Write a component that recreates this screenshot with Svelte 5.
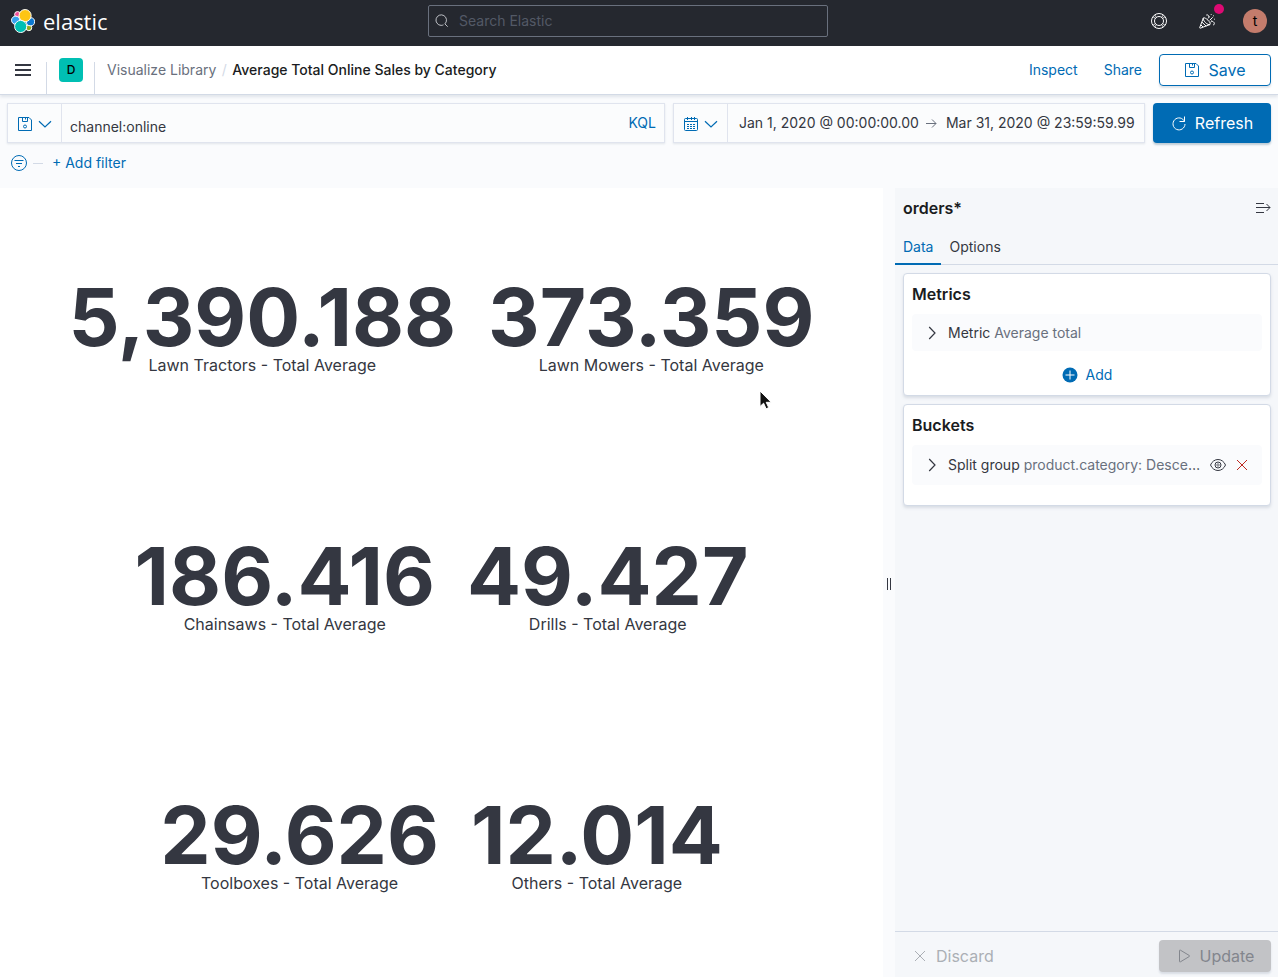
<script>
  const metrics = [
    { value: '5,390.188', label: 'Lawn Tractors - Total Average' },
    { value: '373.359', label: 'Lawn Mowers - Total Average' },
    { value: '186.416', label: 'Chainsaws - Total Average' },
    { value: '49.427', label: 'Drills - Total Average' },
    { value: '29.626', label: 'Toolboxes - Total Average' },
    { value: '12.014', label: 'Others - Total Average' }
  ];
  const tabs = ['Data', 'Options'];
  let activeTab = $state('Data');
  let query = $state('channel:online');
  let search = $state('');
</script>

{#snippet saveIcon()}
  <svg class="icon" viewBox="0 0 16 16" aria-hidden="true">
    <path d="M1.500 1.500h10.500l2.500 2.500v10.500h-13z" />
    <path d="M5.500 1.500v4h5v-4M8.500 1.500v2" />
    <circle cx="8" cy="10.500" r="1.500" />
  </svg>
{/snippet}

{#snippet chevronDown()}
  <svg class="icon" viewBox="0 0 16 16" aria-hidden="true"><path stroke-width="1.200" d="M2 5.200 8 11l6-5.800" /></svg>
{/snippet}

{#snippet chevronRight()}
  <svg class="icon" viewBox="0 0 16 16" aria-hidden="true"><path stroke-width="1.200" d="M5.200 2 11 8l-5.800 6" /></svg>
{/snippet}

{#snippet cross()}
  <svg class="icon" viewBox="0 0 16 16" aria-hidden="true"><path d="m3 3 10 10M13 3 3 13" /></svg>
{/snippet}

<div class="app">
  <header class="top">
    <a class="brand" href="#home" aria-label="Elastic home">
      <svg class="logo" viewBox="0 0 32 32" aria-hidden="true">
        <g stroke="#fff" stroke-width="1.300">
          <circle cx="8.700" cy="7.300" r="3.900" fill="#f04e98" />
          <circle cx="23.800" cy="25" r="3.900" fill="#93a81e" />
          <circle cx="6.200" cy="15" r="5.500" fill="#36a2ef" />
          <circle cx="26" cy="17" r="5.400" fill="#0b78d0" />
          <circle cx="18.800" cy="8.800" r="8.100" fill="#fec514" />
          <circle cx="12.900" cy="23.300" r="8.100" fill="#00bfb3" />
        </g>
      </svg>
      <span>elastic</span>
    </a>
    <label class="search">
      <svg class="icon" viewBox="0 0 16 16" aria-hidden="true">
        <path d="M11.300 11.300A6 6 0 1 0 7 13c1 0 1.900-.2 2.700-.6M11.300 11.300l3.200 3.200" />
      </svg>
      <input type="search" placeholder="Search Elastic" aria-label="Search Elastic" bind:value={search} />
    </label>
    <div class="tools">
      <button aria-label="Help">
        <svg class="icon" viewBox="0 0 16 16" aria-hidden="true">
          <circle cx="8" cy="8" r="7.500" /><circle cx="8" cy="8" r="4.500" />
          <path stroke-width=".8" d="M5.300 4.400 3.800 2M4.400 5.300 2 3.800M10.700 4.400 12.200 2M11.600 5.300 14 3.800M5.300 11.600 3.800 14M4.400 10.700 2 12.200M10.700 11.600l1.500 2.400M11.600 10.700l2.400 1.500" />
        </svg>
      </button>
      <button class="news" aria-label="News feed">
        <svg class="icon" viewBox="0 0 16 16" aria-hidden="true">
          <path d="M4.400 4.900.7 14.600c-.1.400.2.700.6.600L11 11.500M4.400 4.900c.7-.6 2.900.6 4.600 2.300s2.700 3.600 2 4.300c-.8.700-2.900-.3-4.600-2S3.700 5.700 4.400 4.900zM3 9.200l4.200 4M2 12l2 2" />
          <path d="M9 5.500c1-1 1-2.400.2-3.200-.6-.6-1.600-.6-2 0M10.700 7.300l3-3M11.500 9.200c1.300-1.200 2.800-.8 3.500.3.700 1.200.2 2.500-.9 2.500" />
          <path d="M10.500 3.500v.8M12.200 1v.8M14.200 2.800h.8M15 6.200h.8M12.500 7.500h.6" />
        </svg>
        <span class="dot"></span>
      </button>
      <button class="user" aria-label="Account menu">t</button>
    </div>
  </header>

  <nav class="crumbs" aria-label="Breadcrumbs">
    <button class="menu" aria-label="Toggle primary navigation">
      <svg viewBox="0 0 16 16" aria-hidden="true"><path d="M0 2h16v2H0zM0 7h16v2H0zM0 12h16v2H0z" /></svg>
    </button>
    <button class="space" aria-label="Default space"><span>D</span></button>
    <a href="#library">Visualize Library</a>
    <span class="slash">/</span>
    <strong>Average Total Online Sales by Category</strong>
    <div class="actions">
      <button class="link">Inspect</button>
      <button class="link">Share</button>
      <button class="save">{@render saveIcon()}Save</button>
    </div>
  </nav>

  <section class="querybar">
    <div class="row">
      <div class="box query">
        <button class="prefix" aria-label="Saved queries">{@render saveIcon()}{@render chevronDown()}</button>
        <input type="text" aria-label="Query" bind:value={query} />
        <button class="link kql">KQL</button>
      </div>
      <div class="box dates">
        <button class="prefix" aria-label="Quick date ranges">
          <svg class="icon" viewBox="0 0 16 16" aria-hidden="true">
            <path d="M2.500 2.500h11a1 1 0 0 1 1 1v10a1 1 0 0 1-1 1h-11a1 1 0 0 1-1-1v-10a1 1 0 0 1 1-1zM1.500 5.500h13M4.500 1v3M8.500 1v3M11.500 1v3" />
            <path d="M4 8.500h8M4 10.500h8M4 12.500h8" stroke-dasharray="2 1" />
          </svg>
          {@render chevronDown()}
        </button>
        <button class="date">Jan 1, 2020 @ 00:00:00.00</button>
        <svg class="arrow" viewBox="0 0 12 12" aria-hidden="true"><path d="M1 6.500h10M7 2.500l4 4-4 4" /></svg>
        <button class="date">Mar 31, 2020 @ 23:59:59.99</button>
      </div>
      <button class="refresh">
        <svg class="icon" viewBox="0 0 16 16" aria-hidden="true"><path d="M13.500 6.500A6 6 0 1 0 14 9M13.500 1.500v5h-5" /></svg>
        Refresh
      </button>
    </div>
    <div class="filters">
      <button aria-label="Filter options">
        <svg class="icon" viewBox="0 0 16 16" aria-hidden="true"><circle cx="8" cy="8" r="7.500" /><path d="M3.500 5.500h9M5 8.500h6M7 11.500h2" /></svg>
      </button>
      <span class="dash"></span>
      <button class="link">+ Add filter</button>
    </div>
  </section>

  <main>
    <section class="chart" aria-label="Average Total Online Sales by Category">
      {#each metrics as m}
        <div class="metric">
          <div class="value">{m.value}</div>
          <div class="label">{m.label}</div>
        </div>
      {/each}
      <svg class="cursor" viewBox="0 0 14 20" aria-hidden="true">
        <path d="M1 1v15.500l3.600-3.300 2.500 5.600 2.600-1.200-2.500-5.300h5z" fill="#111" stroke="#fff" />
      </svg>
    </section>
    <button class="resizer" aria-label="Resize panel"><span></span></button>
    <aside>
      <div class="index">
        <h2>orders*</h2>
        <button aria-label="Collapse editor">
          <svg class="icon" viewBox="0 0 16 16" aria-hidden="true"><path d="M1 3.500h8M1 7.500h14M1 12.500h8M11.500 4 15 7.500 11.500 11" /></svg>
        </button>
      </div>
      <div class="tabs" role="tablist">
        {#each tabs as tab}
          <button role="tab" aria-selected={activeTab === tab} class:active={activeTab === tab} onclick={() => (activeTab = tab)}>{tab}</button>
        {/each}
      </div>
      <div class="cards">
        <section class="card">
          <h3>Metrics</h3>
          <div class="agg">
            <button class="toggle">{@render chevronRight()}<span class="text">Metric <span>Average total</span></span></button>
          </div>
          <button class="link add">
            <svg viewBox="0 0 16 16" aria-hidden="true"><circle cx="8" cy="8" r="7.500" fill="#006bb4" /><path d="M3.500 8h9M8 3.500v9" stroke="#fff" /></svg>
            Add
          </button>
        </section>
        <section class="card buckets">
          <h3>Buckets</h3>
          <div class="agg tall">
            <button class="toggle">{@render chevronRight()}<span class="text">Split group <span>product.category: Descending</span></span></button>
            <button aria-label="Disable split group">
              <svg class="icon" viewBox="0 0 16 16" aria-hidden="true"><path d="M.5 8C2 4.500 4.800 2.500 8 2.500s6 2 7.500 5.500c-1.500 3.500-4.300 5.500-7.500 5.500S2 11.500.5 8z" /><circle cx="8" cy="8" r="3" /><circle cx="8" cy="8" r="1.200" stroke-width=".7" /></svg>
            </button>
            <button class="danger" aria-label="Remove split group">{@render cross()}</button>
          </div>
        </section>
      </div>
      <footer>
        <button class="discard" disabled>{@render cross()}Discard</button>
        <button class="update" disabled>
          <svg class="icon" viewBox="0 0 16 16" aria-hidden="true"><path d="M3.500 2.500v11c0 .5.400.6.800.4l9-5.400c.4-.3.400-.7 0-1l-9-5.400c-.4-.2-.8-.1-.8.400z" /></svg>
          Update
        </button>
      </footer>
    </aside>
  </main>
</div>

<style>
  :global(body) { margin: 0; }
  .app {
    min-height: 100vh;
    display: flex;
    flex-direction: column;
    font: 14px/24px Inter, sans-serif;
    color: #343741;
    background: #fafbfd;
  }
  .app :global(*) { box-sizing: border-box; }
  button, input {
    font: inherit;
    color: inherit;
    background: none;
    border: 0;
    padding: 0;
    margin: 0;
    min-width: 0;
  }
  button { display: flex; align-items: center; cursor: pointer; }
  button:disabled { cursor: not-allowed; }
  a { text-decoration: none; }
  h2, h3 { margin: 0; font-size: 16px; font-weight: 600; line-height: 24px; color: #1a1c21; }
  .icon { width: 16px; height: 16px; flex: none; fill: none; stroke: currentColor; }
  .link { color: #006bb4; }

  .top {
    height: 46px;
    display: grid;
    grid-template-columns: 1fr 400px 1fr;
    align-items: center;
    padding: 0 11px 4px;
    background: #25282f;
    color: #fff;
  }
  .brand { display: flex; align-items: center; gap: 8px; color: #fff; font: 400 22px/32px "Open Sans", sans-serif; }
  .logo { width: 24px; height: 24px; }
  .search {
    display: flex;
    align-items: center;
    gap: 10px;
    width: 400px;
    height: 32px;
    margin-left: -11px;
    padding: 0 6px;
    border: 1px solid #69707d;
    border-radius: 2px;
    color: #d4d6da;
  }
  .search .icon { width: 14px; height: 14px; }
  .search input { flex: 1; outline: 0; }
  .search input::placeholder { color: #535966; opacity: 1; }
  .tools { display: flex; justify-content: flex-end; align-items: center; gap: 32px; }
  .news { position: relative; }
  .dot { position: absolute; right: -9px; top: -9px; width: 10px; height: 10px; border-radius: 50%; background: #dd0a73; }
  .user { width: 24px; height: 24px; margin-left: -4px; justify-content: center; border-radius: 50%; background: #c47c6c; color: #000; }

  .crumbs {
    position: relative;
    display: flex;
    align-items: center;
    height: 49px;
    padding-right: 7px;
    background: #fff;
    border-bottom: 1px solid #d3dae6;
    box-shadow: 0 2px 3px rgba(152, 162, 179, .25);
  }
  .menu, .space { align-self: flex-end; height: 32px; border-right: 1px solid #d3dae6; }
  .menu { width: 47px; padding: 0 0 16px 15px; }
  .menu svg { width: 16px; height: 16px; fill: #343741; }
  .space { width: 48px; padding-left: 12px; margin-right: 12px; align-items: flex-start; }
  .space span { width: 24px; height: 24px; margin-top: -4px; border-radius: 4px; background: #00bfb3; color: #000; font-size: 12px; font-weight: 500; text-align: center; }
  .crumbs a { color: #69707d; }
  .crumbs strong { font-weight: 500; color: #1a1c21; }
  .slash { width: 16px; text-align: center; color: #d3dae6; }
  .actions { margin-left: auto; display: flex; align-items: center; gap: 26px; }
  .save {
    width: 112px;
    height: 32px;
    margin-left: -9px;
    justify-content: center;
    gap: 8px;
    border: 1px solid #006bb4;
    border-radius: 4px;
    color: #006bb4;
    font-size: 16px;
    box-shadow: 0 2px 2px rgba(152, 162, 179, .3);
  }

  .querybar { padding: 8px 7px 0; }
  .row { display: flex; gap: 8px; }
  .box {
    display: flex;
    align-items: center;
    height: 40px;
    border: 1px solid #e0e4ee;
    background: #fbfcfd;
    box-shadow: 0 1px 2px rgba(152, 162, 179, .25);
  }
  .prefix { align-self: stretch; width: 54px; flex: none; padding: 2px 0 0 9px; gap: 4px; border-right: 1px solid #e0e4ee; color: #006bb4; }
  .query { flex: 1; }
  .query input { flex: 1; height: 100%; padding: 6px 8px 0; outline: 0; }
  .kql { padding: 0 8px; }
  .dates { width: 472px; }
  .dates .date { padding: 0 6px 0 11px; white-space: nowrap; }
  .arrow { width: 12px; height: 12px; flex: none; fill: none; stroke: #69707d; }
  .dates .arrow + .date { padding: 0 0 0 9px; }
  .refresh {
    width: 118px;
    height: 40px;
    justify-content: center;
    gap: 8px;
    border-radius: 4px;
    background: #006bb4;
    color: #fff;
    font-size: 16px;
    box-shadow: 0 2px 2px rgba(54, 97, 126, .3);
  }
  .filters { display: flex; align-items: center; height: 45px; padding: 0 4px 5px; color: #006bb4; }
  .dash { width: 10px; height: 1px; margin: 0 9px 0 6px; background: #d3dae6; }

  main { flex: 1; display: flex; }
  .chart {
    position: relative;
    flex: 1;
    display: flex;
    flex-wrap: wrap;
    justify-content: center;
    align-items: center;
    padding-top: 11px;
    background: #fff;
  }
  .metric { padding: 0 16px; text-align: center; }
  .value { font-size: 80px; font-weight: 700; line-height: 72px; }
  .label { font-size: 16px; line-height: 24px; }
  .cursor { position: absolute; left: 759px; top: 202px; width: 14px; height: 20px; pointer-events: none; }
  .resizer { width: 12px; padding-top: 2px; justify-content: center; cursor: col-resize; }
  .resizer span { width: 4px; height: 12px; border: solid #343741; border-width: 0 1px; }

  aside { width: 383px; display: flex; flex-direction: column; background: #f5f7fa; }
  .index { display: flex; justify-content: space-between; align-items: center; height: 40px; padding: 0 7px 0 8px; }
  .tabs { display: flex; height: 37px; border-bottom: 1px solid #d3dae6; }
  .tabs button { height: 37px; padding: 2px 8px 0; border-bottom: 2px solid transparent; }
  .tabs .active { color: #006bb4; border-color: #006bb4; }
  .cards { flex: 1; display: flex; flex-direction: column; gap: 8px; padding: 8px 7px 8px 8px; }
  .card {
    display: flex;
    flex-direction: column;
    gap: 8px;
    padding: 8px 8px 4px;
    background: #fff;
    border: 1px solid #d3dae6;
    border-radius: 4px;
    box-shadow: 0 2px 3px rgba(152, 162, 179, .3);
  }
  .buckets { padding-bottom: 20px; }
  .agg { display: flex; align-items: center; gap: 8px; height: 37px; padding: 0 12px; border-radius: 4px; background: #fafbfd; }
  .tall { height: 40px; }
  .toggle { flex: 1; gap: 8px; }
  .text { flex: 1; text-align: left; white-space: nowrap; overflow: hidden; text-overflow: ellipsis; }
  .text span { color: #69707d; }
  .danger { color: #bd271e; }
  .add { align-self: center; gap: 8px; height: 32px; }
  .add svg { width: 16px; height: 16px; }
  footer { display: flex; justify-content: space-between; padding: 8px 7px 5px 8px; border-top: 1px solid #d3dae6; font-size: 16px; }
  .discard { gap: 8px; padding-left: 9px; color: #abafb5; }
  .update { width: 112px; height: 32px; justify-content: center; gap: 8px; border-radius: 4px; background: #c2c3c6; color: #83868d; box-shadow: 0 2px 2px rgba(152, 162, 179, .3); }
</style>
